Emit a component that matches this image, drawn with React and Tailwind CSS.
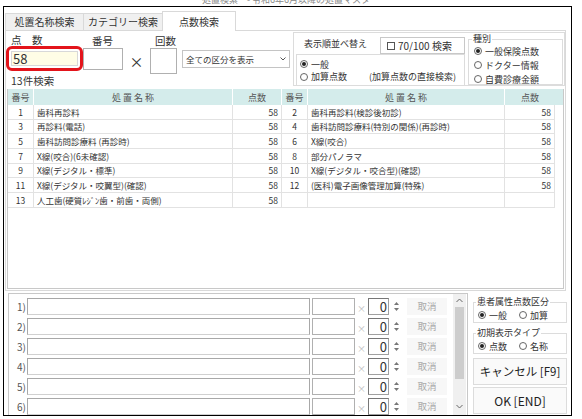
import React from "react";

const leftRows = [
  [1, "歯科再診料", 58],
  [3, "再診料(電話)", 58],
  [5, "歯科訪問診療料 (再診時)", 58],
  [7, "X線(咬合)(6未確認)", 58],
  [9, "X線(デジタル・標準)", 58],
  [11, "X線(デジタル・咬翼型)(確認)", 58],
  [13, "人工歯(硬質ﾚｼﾞﾝ歯・前歯・両側)", 58],
];
const rightRows = [
  [2, "歯科再診料(検診後初診)", 58],
  [4, "歯科訪問診療料(特別の関係)(再診時)", 58],
  [6, "X線(咬合)", 58],
  [8, "部分パノラマ", 58],
  [10, "X線(デジタル・咬合型)(確認)", 58],
  [12, "(医科)電子画像管理加算(特殊)", 58],
  ["", "", ""],
];

function Radio({ checked, label }) {
  return (
    <span className="flex items-center gap-[3px]">
      <span className="w-[8px] h-[8px] rounded-full border border-[#666] bg-white flex items-center justify-center">
        {checked && <span className="w-[4px] h-[4px] rounded-full bg-[#222]" />}
      </span>
      <span>{label}</span>
    </span>
  );
}

function Tab({ w, children }) {
  return (
    <div className={`${w} h-[17px] bg-[#f0f0f0] border border-[#d9d9d9] border-b-0 border-r-0 text-[10px] leading-none flex items-center justify-center text-[#333]`}>
      {children}
    </div>
  );
}

function Cells({ row, widths }) {
  return (
    <>
      <div className={`${widths[0]} h-full border-r border-[#e2e2e2] flex items-center justify-center`}>{row[0]}</div>
      <div className={`${widths[1]} h-full border-r border-[#e2e2e2] flex items-center pl-[3px] whitespace-nowrap overflow-hidden`}>{row[1]}</div>
      <div className={`${widths[2]} h-full border-r border-[#e2e2e2] flex items-center justify-end pr-[3px]`}>{row[2]}</div>
    </>
  );
}

function Arrow({ up }) {
  return (
    <svg width="5" height="3" viewBox="0 0 5 3">
      {up ? <path d="M0 3 L2.5 0 L5 3 Z" fill="#777" /> : <path d="M0 0 L2.5 3 L5 0 Z" fill="#777" />}
    </svg>
  );
}

function EntryRow({ n }) {
  return (
    <div className="h-[17px] flex items-stretch">
      <div className="w-[18px] text-[10px] text-[#555] flex items-center justify-end pr-[1px] leading-none">{n})</div>
      <div className="w-[283px] border border-[#a8a8a8] border-b-[#d0d0d0] bg-white" />
      <div className="w-[43px] ml-[2px] border border-[#b0b0b0] bg-white" />
      <div className="w-[13px] text-[9px] text-[#bbb] flex items-end justify-center leading-[12px]">×</div>
      <div className="w-[21px] border border-[#a0a0a0] border-t-[#777] border-l-[#777] bg-white text-[13px] leading-none flex items-center justify-end pr-[1px] text-[#333]">0</div>
      <div className="w-[12px] ml-[1px] flex flex-col items-center justify-center gap-[3px]">
        <Arrow up />
        <Arrow />
      </div>
      <div className="w-[40px] ml-[5px] bg-[#f7f7f7] text-[9.5px] text-[#aaa] flex items-center justify-center leading-none">取消</div>
    </div>
  );
}

export default function App() {
  const w = ["w-[26px]", "w-[199px]", "w-[49px]"];
  const w2 = ["w-[26px]", "w-[197px]", "w-[50px]"];
  return (
    <div className="w-[582px] h-[419px] bg-white overflow-hidden text-[#333] font-['Noto_Sans_CJK_JP','Noto_Sans',sans-serif]">
      <div className="h-[6px] overflow-hidden flex justify-center pr-[10px]">
        <div className="text-[9px] leading-[10px] -mt-[5px] text-[#888] whitespace-nowrap">処置検索　- 令和6年6月以降の処置マスタ</div>
      </div>
      <div className="ml-[3px] w-[569px] h-[410px] border border-black flex flex-col overflow-hidden">
        {/* tabs */}
        <div className="h-[23px] shrink-0 flex items-end pl-[1px]">
          <Tab w="w-[78px]">処置名称検索</Tab>
          <Tab w="w-[79px]">カテゴリー検索</Tab>
          <div className="w-[74px] h-[20px] bg-white border border-[#d9d9d9] border-b-0 -mb-px relative z-10 text-[10px] leading-none flex items-center justify-center">
            点数検索
          </div>
        </div>

        {/* panel */}
        <div className="ml-[1px] w-[561px] h-[261px] shrink-0 border border-[#d9d9d9] flex flex-col">
          <div className="h-[57px] shrink-0 flex">
            {/* left controls */}
            <div className="w-[287px] flex flex-col">
              <div className="flex items-start pt-[2px] h-[43px]">
                <div className="w-[77px] flex flex-col">
                  <div className="h-[13px] text-[10.5px] leading-[13px] pl-[5px]">点　数</div>
                  <div className="h-[25px] border-[3px] border-[#e3141b] rounded-[6px] p-[2px] flex">
                    <div className="flex-1 bg-[#fffde6] border border-[#d8d8d8] text-[13px] leading-none flex items-center pl-[1px]">58</div>
                  </div>
                </div>
                <div className="w-[40px] flex flex-col">
                  <div className="h-[15px] text-[10.5px] leading-[15px] pl-[9px]">番号</div>
                  <div className="h-[22px] border border-[#b0b0b0] bg-white" />
                </div>
                <div className="w-[27px] pt-[21px] text-[14px] leading-none flex justify-center">×</div>
                <div className="w-[27px] flex flex-col">
                  <div className="h-[15px] text-[10.5px] leading-[15px] pl-[5px]">回数</div>
                  <div className="h-[26px] border border-[#b0b0b0] bg-white" />
                </div>
                <div className="w-[108px] h-[18px] ml-[5px] mt-[17px] border border-[#c4c4c4] bg-white flex items-center justify-between px-[3px] text-[8.5px] leading-none">
                  <span>全ての区分を表示</span>
                  <svg width="6" height="4" viewBox="0 0 6 4">
                    <path d="M0.5 0.5 L3 3 L5.5 0.5" stroke="#555" strokeWidth="1" fill="none" />
                  </svg>
                </div>
              </div>
              <div className="h-[13px] text-[10.5px] leading-[13px] pl-[5px]">13件検索</div>
            </div>

            {/* right group */}
            <div className="w-[272px] h-[54px] mt-[1px] border border-[#dcdcdc] flex">
              <div className="w-[173px] flex flex-col">
                <div className="h-[21px] flex items-end">
                  <span className="self-center pl-[10px] text-[9px] leading-none">表示順並べ替え</span>
                  <div className="ml-auto mr-[2px] w-[85px] h-[17px] border border-[#c8c8c8] flex items-center gap-[3px] pl-[6px] text-[10px] leading-none">
                    <span className="w-[8px] h-[8px] border border-[#555] bg-white" />
                    <span>70/100 検索</span>
                  </div>
                </div>
                <div className="mx-[2px] flex-1 border border-[#dcdcdc] border-b-0 pt-[3px] pl-[3px] text-[9px] leading-none">
                  <div className="h-[12px] flex items-center">
                    <Radio checked label="一般" />
                  </div>
                  <div className="h-[13px] flex items-center">
                    <Radio label="加算点数" />
                    <span className="ml-[22px]">(加算点数の直接検索)</span>
                  </div>
                </div>
              </div>
              <fieldset className="w-[95px] ml-[1px] h-[52px] border border-[#dcdcdc] text-[9px] leading-none">
                <legend className="ml-[3px] px-[1px] leading-[12px]">種別</legend>
                <div className="pl-[5px] -mt-[1px]">
                  <div className="h-[14px] flex items-center"><Radio checked label="一般保険点数" /></div>
                  <div className="h-[14px] flex items-center"><Radio label="ドクター情報" /></div>
                  <div className="h-[14px] flex items-center"><Radio label="自費診療金額" /></div>
                </div>
              </fieldset>
            </div>
          </div>

          {/* list view */}
          <div className="ml-[1px] mt-[1px] w-[557px] h-[200px] border border-t-0 border-[#c8c8c8] bg-white text-[8.5px] leading-none text-[#333]">
            <div className="h-[16px] flex bg-[#d4eceb] text-[9px] text-[#555]">
              <div className="w-[26px] border-r border-white flex items-center justify-center">番号</div>
              <div className="w-[199px] border-r border-white flex items-center justify-center">処 置 名 称</div>
              <div className="w-[49px] border-r border-white flex items-center justify-center">点数</div>
              <div className="w-[26px] border-r border-white flex items-center justify-center">番号</div>
              <div className="w-[197px] border-r border-white flex items-center justify-center">処 置 名 称</div>
              <div className="w-[50px] flex items-center justify-center">点数</div>
            </div>
            {leftRows.map((r, i) => (
              <div key={i} className="h-[14.7px] flex w-[547px] border-b border-[#e2e2e2]">
                <Cells row={r} widths={w} />
                <Cells row={rightRows[i]} widths={w2} />
              </div>
            ))}
          </div>
        </div>

        {/* bottom */}
        <div className="flex-1 flex min-h-0">
          <div className="ml-[4px] mt-[2px] w-[460px] border border-b-0 border-[#c8c8c8] flex overflow-hidden">
            <div className="flex-1 pt-[4px] flex flex-col gap-[3px]">
              {[1, 2, 3, 4, 5, 6].map((n) => (
                <EntryRow key={n} n={n} />
              ))}
            </div>
            <div className="w-[13px] mr-[1px] bg-[#f0f0f0] flex flex-col items-center">
              <svg width="7" height="5" viewBox="0 0 7 5" className="mt-[4px]">
                <path d="M0.5 4 L3.5 1 L6.5 4" stroke="#666" strokeWidth="1" fill="none" />
              </svg>
              <div className="w-[9px] h-[72px] mt-[4px] bg-[#cdcdcd]" />
              <div className="flex-1" />
              <svg width="7" height="5" viewBox="0 0 7 5" className="mb-[6px]">
                <path d="M0.5 1 L3.5 4 L6.5 1" stroke="#666" strokeWidth="1" fill="none" />
              </svg>
            </div>
          </div>
          <div className="ml-[5px] w-[94px] flex flex-col text-[9px] leading-none">
            <fieldset className="mt-[5px] border border-[#dcdcdc]">
              <legend className="ml-[2px] px-[1px] leading-[12px]">患者属性点数区分</legend>
              <div className="h-[14px] flex items-center pl-[4px] gap-[12px]">
                <Radio checked label="一般" />
                <Radio label="加算" />
              </div>
            </fieldset>
            <fieldset className="mt-[4px] border border-[#dcdcdc]">
              <legend className="ml-[2px] px-[1px] leading-[12px]">初期表示タイプ</legend>
              <div className="h-[14px] flex items-center pl-[4px] gap-[12px]">
                <Radio checked label="点数" />
                <Radio label="名称" />
              </div>
            </fieldset>
            <div className="mt-[4px] h-[27px] border border-[#dcdcdc] bg-[#fafafa] flex items-center justify-center text-[11.5px] text-[#222]">キャンセル [F9]</div>
            <div className="mt-[2px] h-[27px] border border-[#dcdcdc] bg-[#fafafa] flex items-center justify-center text-[12px] text-[#222]">OK [END]</div>
          </div>
        </div>
      </div>
    </div>
  );
}
